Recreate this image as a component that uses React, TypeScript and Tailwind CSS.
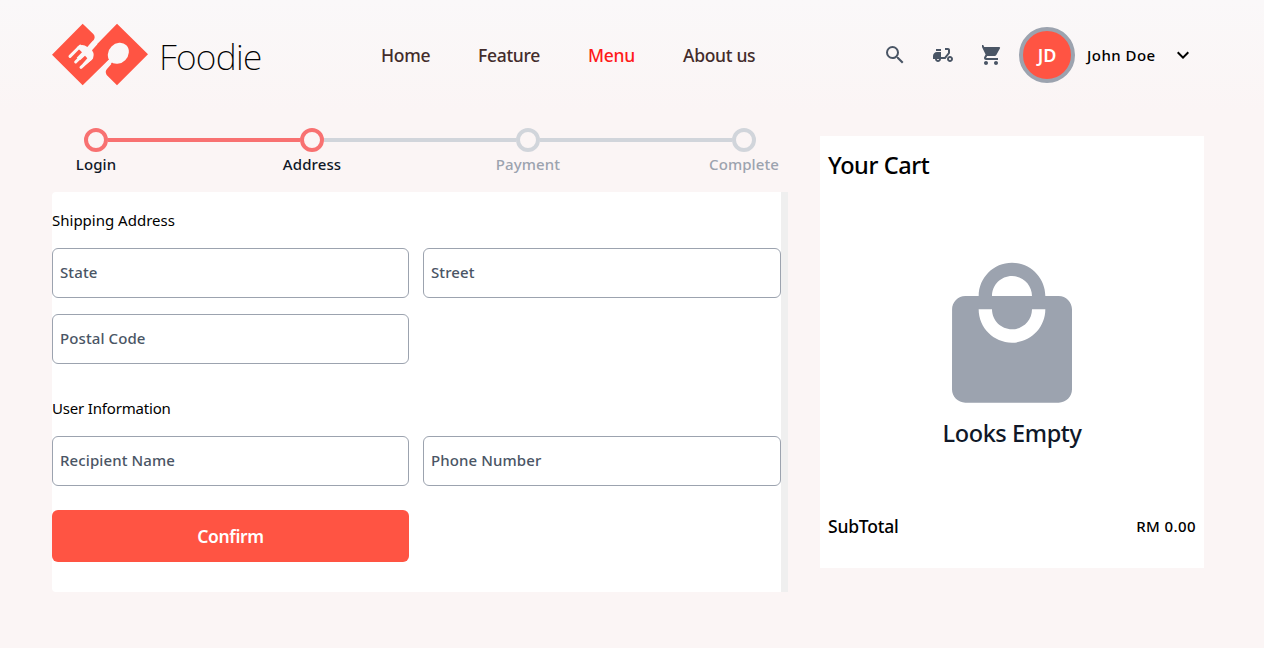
import React from "react";
import { MdSearch, MdShoppingCart, MdExpandMore, MdLocalMall } from "react-icons/md";

function Logo() {
  return (
    <svg width="96" height="63" viewBox="36 40 288 189" className="-mt-0.5 shrink-0">
      <mask id="cutlery" maskUnits="userSpaceOnUse" x="30" y="30" width="300" height="200">
        <rect x="30" y="30" width="300" height="200" fill="#fff" />
        <g fill="none" stroke="#000" strokeWidth="9" strokeLinecap="round">
          <path d="M90 140L121 109M107 157L130 134M123 173L155 144" />
        </g>
        <path d="M110 113Q126 100 142 112L160 92L172 104L156 122Q166 136 156 150L136 166L128 162L142 146L135 138L120 152L110 144L126 128L119 121Z" fill="#000" />
        <ellipse cx="235" cy="131" rx="34" ry="29" transform="rotate(-45 235 131)" fill="#000" />
        <path d="M214 152L202 164" stroke="#000" strokeWidth="12" />
      </mask>
      <path
        mask="url(#cutlery)"
        fill="#ff5443"
        d="M36 135L128 42L160 73Q168 82 160 93L146 108L157 118L231 42L324 134L231 227L200 196Q194 186 201 178L214 163L206 150L128 227Z"
      />
    </svg>
  );
}

function ScooterIcon() {
  return (
    <svg width="24" height="24" viewBox="0 0 24 24" fill="currentColor">
      <path d="M19 7c0-1.1-.9-2-2-2h-3v2h3v2.65L13.52 14H10V9H6c-2.21 0-4 1.79-4 4v3h2c0 1.66 1.34 3 3 3s3-1.34 3-3h4.48L19 10.35V7zM7 17c-.55 0-1-.45-1-1h2c0 .55-.45 1-1 1z" />
      <path d="M5 6h5v2H5zM19 13c-1.66 0-3 1.34-3 3s1.34 3 3 3 3-1.34 3-3-1.34-3-3-3zm0 4c-.55 0-1-.45-1-1s.45-1 1-1 1 .45 1 1-.45 1-1 1z" />
    </svg>
  );
}

const nav = [
  { label: "Home", style: "w-[49px] text-[#432c2b]" },
  { label: "Feature", style: "w-[62px] text-[#432c2b]" },
  { label: "Menu", style: "w-[47px] text-[#ff1a1a]" },
  { label: "About us", style: "w-[74px] text-[#432c2b]" },
];

function Header() {
  return (
    <header className="flex h-[110px] items-center pl-[52px]">
      <Logo />
      <span className="ml-[11px] w-[222px] pt-1 text-[35.5px] font-extralight leading-none tracking-[-0.7px] text-black">Foodie</span>
      <nav className="flex gap-12 pt-px text-[17.5px] font-medium tracking-[-0.3px]">
        {nav.map((n) => (
          <a key={n.label} className={`whitespace-nowrap ${n.style}`}>{n.label}</a>
        ))}
      </nav>
      <div className="ml-[126px] flex gap-6 text-gray-600">
        <MdSearch size={24} />
        <ScooterIcon />
        <MdShoppingCart size={24} className="[clip-path:inset(0_0_0_3px)]" />
      </div>
      <div className="ml-4 flex size-14 items-center justify-center rounded-full border-4 border-[#9ca3af] bg-[#ff5443] text-[18px] font-semibold text-white">JD</div>
      <span className="ml-3 w-[84px] text-[15px] font-medium tracking-[0.45px]">John Doe</span>
      <MdExpandMore size={24} />
    </header>
  );
}

const steps = [
  { label: "Login", done: true, line: "bg-[#f87171]" },
  { label: "Address", done: true, line: "bg-[#d1d5db]" },
  { label: "Payment", done: false, line: "bg-[#d1d5db]" },
  { label: "Complete", done: false, line: "" },
];

function Stepper() {
  return (
    <div className="flex h-16 pl-8">
      {steps.map((s) => (
        <div key={s.label} className={s.line ? "w-[216px]" : "w-6"}>
          <div className="flex items-center">
            <div className={`size-6 shrink-0 rounded-full border-4 ${s.done ? "border-[#f87171]" : "border-[#d1d5db]"}`} />
            {s.line && <div className={`h-1 flex-1 ${s.line}`} />}
          </div>
          <div className={`flex w-6 justify-center whitespace-nowrap text-[15px] font-medium leading-6 tracking-[0.1px] ${s.done ? "text-gray-900" : "text-[#9ca3af]"}`}>{s.label}</div>
        </div>
      ))}
    </div>
  );
}

function Field({ label }: { label: string }) {
  return (
    <div className="flex h-[50px] items-center rounded-md border border-[#9ca3af] px-[7px] pb-0.5 text-[15px] font-medium tracking-[0.1px] text-gray-600">
      {label}
    </div>
  );
}

export default function App() {
  return (
    <div className="min-h-[648px] bg-[#fbf5f5] bg-[linear-gradient(#faf8f9,#fbf5f5_110px)] font-['Noto_Sans','Open_Sans',sans-serif] text-black">
      <Header />
      <main className="flex items-start gap-8 pl-[52px]">
        <section className="w-[736px] pt-[18px]">
          <Stepper />
          <div className="h-[400px] rounded-l-sm border-r-[7px] border-[#efefef] bg-white pt-4">
            <h2 className="text-[15px] leading-6">Shipping Address</h2>
            <div className="mt-4 grid grid-cols-[357px_358px] gap-x-[14px] gap-y-4">
              <Field label="State" />
              <Field label="Street" />
              <Field label="Postal Code" />
            </div>
            <h2 className="mt-8 text-[15px] leading-6 tracking-[-0.18px]">User Information</h2>
            <div className="mt-4 grid grid-cols-[357px_358px] gap-x-[14px]">
              <Field label="Recipient Name" />
              <Field label="Phone Number" />
            </div>
            <button className="mt-6 h-[52px] w-[357px] rounded-md bg-[#ff5443] text-[17.5px] font-semibold tracking-[-0.35px] text-white">Confirm</button>
          </div>
        </section>
        <aside className="mt-[26px] flex h-[432px] w-96 flex-col bg-white px-2">
          <h1 className="mt-[13px] text-[23.5px] font-medium leading-8 tracking-[-0.4px]">Your Cart</h1>
          <div className="mt-[75px] flex flex-col items-center">
            <MdLocalMall size={160} color="#9ca3af" />
            <p className="mt-px text-[23.5px] font-medium leading-8 tracking-[-0.4px] text-gray-900">Looks Empty</p>
          </div>
          <div className="mt-[64px] flex items-center justify-between font-medium">
            <span className="text-[17.5px] tracking-[-0.2px]">SubTotal</span>
            <span className="text-[15px] tracking-[0.4px]">RM 0.00</span>
          </div>
        </aside>
      </main>
    </div>
  );
}
